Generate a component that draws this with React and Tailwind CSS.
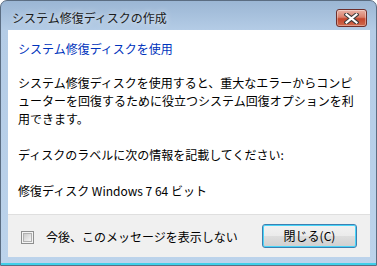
import { useState } from "react";

const jp = { fontFamily: '"Noto Sans CJK JP", "Noto Sans", sans-serif' };

const CloseButton = () => (
  <button className="flex h-[18px] w-[31px] items-center justify-center rounded-[3px] border border-[#6e2f2c] bg-[linear-gradient(to_bottom,#e9b2a6_0%,#d9806c_45%,#c4452c_55%,#cf6b4f_100%)] shadow-[inset_0_0_0_1px_rgba(255,255,255,0.35)]">
    <svg width="15" height="11" viewBox="0 0 15 11">
      <path d="M2.5 1.5 L12.5 9.5 M12.5 1.5 L2.5 9.5" stroke="#3b3b3b" strokeWidth="4.2" strokeLinecap="square" />
      <path d="M2.5 1.5 L12.5 9.5 M12.5 1.5 L2.5 9.5" stroke="#ffffff" strokeWidth="2.2" strokeLinecap="square" />
    </svg>
  </button>
);

const Checkbox = ({ checked, onChange }) => (
  <button
    onClick={onChange}
    className="flex h-[13px] w-[13px] shrink-0 items-center justify-center border border-[#8e8f8f] bg-[#f4f4f4]"
  >
    <span className="block h-[9px] w-[9px] border border-[#b0b0b0] bg-[linear-gradient(135deg,#cbcbcb_0%,#f5f5f5_100%)]">
      {checked && <span className="block text-[9px] leading-[9px] text-[#1f3d7a]">✓</span>}
    </span>
  </button>
);

export default function App() {
  const [dontShow, setDontShow] = useState(false);

  return (
    <div
      style={jp}
      className="flex h-[266px] w-[377px] flex-col overflow-hidden rounded-t-[7px] border border-[#5b6d82] bg-[linear-gradient(to_bottom,#9bb6d4_0px,#b4cce6_29px,#bcd3eb_100%)] text-[12px] text-black shadow-[inset_0_-2px_0_#3fcfe9]"
    >
      {/* title bar */}
      <div className="flex h-[29px] shrink-0 items-start justify-between pl-[11px] pr-[9px] pt-[8px]">
        <span className="leading-[18px] text-[#1b1b1b] [text-shadow:0_0_6px_rgba(255,255,255,0.9)]">
          システム修復ディスクの作成
        </span>
        <CloseButton />
      </div>

      {/* client area */}
      <div className="ml-[7px] mr-[6px] flex flex-col">
        <div className="flex h-[184px] flex-col bg-white pl-[10px] pr-[8px] pt-[10px]">
          <p className="leading-[18px] text-[#0033bc]">システム修復ディスクを使用</p>
          <p className="mt-[16px] leading-[18px]">
            システム修復ディスクを使用すると、重大なエラーからコンピューターを回復するために役立つシステム回復オプションを利用できます。
          </p>
          <p className="mt-[18px] leading-[18px]">ディスクのラベルに次の情報を記載してください:</p>
          <p className="mt-[18px] leading-[18px]">修復ディスク Windows 7 64 ビット</p>
        </div>

        <div className="flex h-[43px] items-center justify-between border-t border-[#dfdfdf] bg-[#f0f0f0] pl-[13px] pr-[13px]">
          <label className="flex items-center gap-[12px] pt-[2px]">
            <Checkbox checked={dontShow} onChange={() => setDontShow(!dontShow)} />
            <span className="leading-[18px]">今後、このメッセージを表示しない</span>
          </label>
          <button className="flex h-[24px] w-[95px] items-center justify-center rounded-[3px] border border-[#3c7fb1] bg-[linear-gradient(to_bottom,#f2f2f2_0%,#ebebeb_48%,#dddddd_52%,#cfcfcf_100%)] leading-[18px] shadow-[inset_0_0_0_1px_#48d4f8]">
            閉じる(C)
          </button>
        </div>
      </div>
    </div>
  );
}
